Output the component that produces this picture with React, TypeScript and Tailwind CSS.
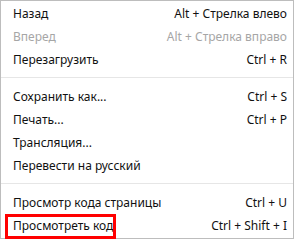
const groups: { label: string; keys?: string; disabled?: boolean; marked?: boolean }[][] = [
  [
    { label: "Назад", keys: "Alt + Стрелка влево" },
    { label: "Вперед", keys: "Alt + Стрелка вправо", disabled: true },
    { label: "Перезагрузить", keys: "Ctrl + R" },
  ],
  [
    { label: "Сохранить как...", keys: "Ctrl + S" },
    { label: "Печать...", keys: "Ctrl + P" },
    { label: "Трансляция..." },
    { label: "Перевести на русский" },
  ],
  [
    { label: "Просмотр кода страницы", keys: "Ctrl + U" },
    { label: "Просмотреть код", keys: "Ctrl + Shift + I", marked: true },
  ],
];

export default function App() {
  return (
    <div className="w-[296px] h-[240px] bg-white overflow-hidden">
      <div
        className="w-[294px] h-[239px] border border-[#bdbdbd] pt-px text-[12px] text-[#111111]"
        style={{ fontFamily: '"Noto Sans", "DejaVu Sans", sans-serif' }}
      >
        {groups.map((group, gi) => (
          <div key={gi}>
            {gi > 0 && <div className="h-px bg-[#e6e6e6] mt-[6px] mb-[7px]" />}
            {group.map((item) => (
              <div
                key={item.label}
                className={`relative flex items-center justify-between h-[23px] pl-[12px] pr-[6px] ${
                  item.disabled ? "text-[#a6a6a6]" : ""
                }`}
              >
                {item.marked && (
                  <div className="absolute left-[4px] top-0 w-[111px] h-[25px] border-[3px] border-[#ff0000]" />
                )}
                <span>{item.label}</span>
                {item.keys && <span>{item.keys}</span>}
              </div>
            ))}
          </div>
        ))}
      </div>
    </div>
  );
}
